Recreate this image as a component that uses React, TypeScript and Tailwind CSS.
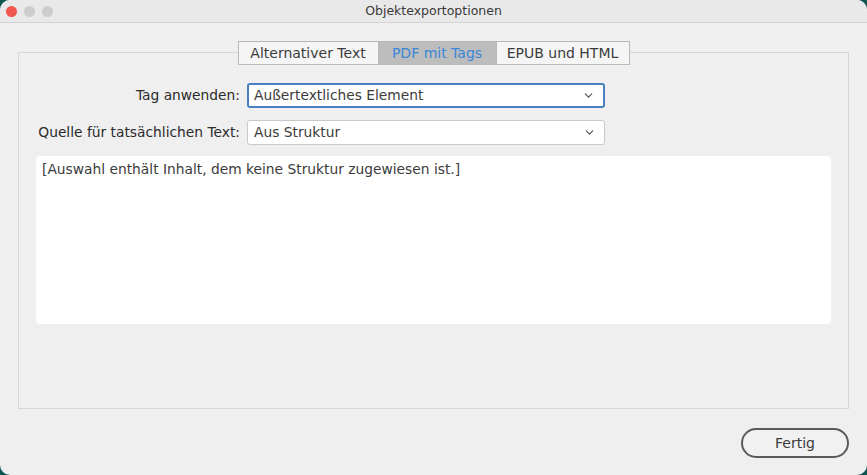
import { ChevronDown } from "lucide-react";

const font = { fontFamily: '"DejaVu Sans", "Open Sans", sans-serif' };

const Select = ({ value, focused }: { value: string; focused?: boolean }) => (
  <div
    className={`flex h-[25px] w-[358px] items-center justify-between rounded-[3px] bg-white pr-[8px] text-[13.8px] text-[#3c3c3c] ${
      focused ? "border-2 border-[#4a7fc1] pl-[5px]" : "border border-[#c9c9c9] pl-[6px]"
    }`}
  >
    <span>{value}</span>
    <ChevronDown className="h-[13px] w-[13px] text-[#555]" strokeWidth={2.2} />
  </div>
);

const App = () => {
  return (
    <div className="h-[475px] w-[867px] bg-[#0f5552]" style={font}>
      <div className="flex h-full w-full flex-col overflow-hidden rounded-[10px] bg-[#efefef]">
        {/* title bar */}
        <div className="relative flex h-[23px] items-center border-b border-[#d3d3d3] bg-[#e9e9e9]">
          <div className="flex gap-[7px] pl-[6px]">
            <span className="h-[11px] w-[11px] rounded-full bg-[#f25850]" />
            <span className="h-[11px] w-[11px] rounded-full bg-[#cdcdcd]" />
            <span className="h-[11px] w-[11px] rounded-full bg-[#cdcdcd]" />
          </div>
          <div className="absolute inset-x-0 text-center text-[12.5px] text-[#3a3a3a]">
            Objektexportoptionen
          </div>
        </div>

        <div className="flex flex-1 flex-col px-[18px] pt-[18px]">
          {/* tab strip over the group box */}
          <div className="relative z-10 flex justify-center">
            <div className="flex h-[24px] border border-[#b9b9b9] bg-[#f5f5f5] text-[14px]">
              <div className="flex w-[140px] items-center justify-center border-r border-[#b9b9b9] text-[#3c3c3c]">
                Alternativer Text
              </div>
              <div className="flex w-[117px] items-center justify-center bg-[#bdbdbd] text-[#3b87d8]">
                PDF mit Tags
              </div>
              <div className="flex w-[133px] items-center justify-center border-l border-[#b9b9b9] text-[#3c3c3c]">
                EPUB und HTML
              </div>
            </div>
          </div>

          <div className="-mt-[13px] flex h-[357px] flex-col border border-[#d6d6d6] px-[17px] pt-[30px]">
            <div className="flex flex-col gap-[12px] text-[13.8px] text-[#2b2b2b]">
              <div className="flex items-center">
                <div className="w-[211px] whitespace-nowrap pr-[7px] text-right">Tag anwenden:</div>
                <Select value="Außertextliches Element" focused />
              </div>
              <div className="flex items-center">
                <div className="w-[211px] whitespace-nowrap pr-[7px] text-right">
                  Quelle für tatsächlichen Text:
                </div>
                <Select value="Aus Struktur" />
              </div>
            </div>

            <div className="mt-[11px] h-[168px] rounded-[4px] bg-white px-[6px] pt-[3px] text-[13.8px] text-[#3c3c3c]">
              [Auswahl enthält Inhalt, dem keine Struktur zugewiesen ist.]
            </div>
          </div>

          <div className="flex justify-end pt-[19px]">
            <button className="h-[30px] w-[108px] rounded-full border-2 border-[#5a5a5a] bg-[#f1f1f1] text-[14px] text-[#3a3a3a]">
              Fertig
            </button>
          </div>
        </div>
      </div>
    </div>
  );
};

export default App;
